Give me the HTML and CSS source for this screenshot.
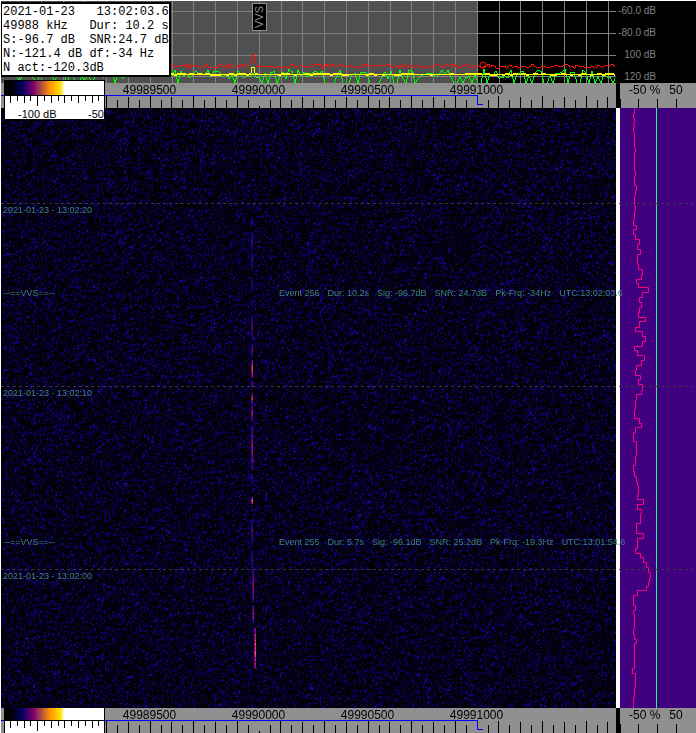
FILE: index.html
```html
<!DOCTYPE html>
<html lang="en">

<head>
    <meta charset="UTF-8">
    <meta name="viewport" content="width=device-width, initial-scale=1.0">
    <title>VVS 49988 kHz</title>
    <link rel="stylesheet" href="styles.css">
</head>

<body>
    <main class="analyzer">
        <section class="spectrum">
            <canvas class="plot" id="spectrum"></canvas>
            <div class="info">
                <pre>2021-01-23   13:02:03.6
49988 kHz   Dur: 10.2 s
S:-96.7 dB  SNR:24.7 dB
N:-121.4 dB df:-34 Hz
N act:-120.3dB</pre>
            </div>
            <span class="marker">VVS</span>
        </section>
        <div class="levels">
            <span>-60.0 dB</span>
            <span>-80.0 dB</span>
            <span>100 dB</span>
            <span>120 dB</span>
        </div>

        <div class="scale raised">
            <canvas class="plot" data-scale></canvas>
            <div class="freqs">
                <span>49989500</span><span>49990000</span><span>49990500</span><span>49991000</span>
            </div>
            <div class="legend">
                <div class="gradient"></div>
                <canvas class="legend-ticks" data-legend></canvas>
                <div class="legend-labels"><span>-100 dB</span><span>-50</span></div>
            </div>
        </div>
        <div class="percent">
            <canvas class="plot" data-percent></canvas>
            <span>-50 %</span><span>50</span>
        </div>

        <section class="recording">
            <canvas class="waterfall" id="waterfall"></canvas>
            <canvas class="profile" id="profile"></canvas>
            <div class="periods">
                <div class="period">2021-01-23 - 13:02:20</div>
                <div class="period">2021-01-23 - 13:02:10</div>
                <div class="period">2021-01-23 - 13:02:00</div>
            </div>
            <div class="event" style="top: 179px">
                <span>--==VVS==--</span>
                <div class="details"><span>Event 256</span><span>Dur: 10.2s</span><span>Sig: -96.7dB</span><span>SNR: 24.7dB</span><span>Pk-Frq: -34Hz</span><span>UTC:13:02:03.6</span></div>
            </div>
            <div class="event" style="top: 428px">
                <span>--==VVS==--</span>
                <div class="details"><span>Event 255</span><span>Dur: 5.7s</span><span>Sig: -96.1dB</span><span>SNR: 25.2dB</span><span>Pk-Frq: -19.3Hz</span><span>UTC:13:01:54.6</span></div>
            </div>
        </section>

        <div class="scale clipped">
            <canvas class="plot" data-scale></canvas>
            <div class="freqs">
                <span>49989500</span><span>49990000</span><span>49990500</span><span>49991000</span>
            </div>
            <div class="legend">
                <div class="gradient"></div>
                <canvas class="legend-ticks" data-legend></canvas>
            </div>
        </div>
        <div class="percent">
            <canvas class="plot" data-percent></canvas>
            <span>-50 %</span><span>50</span>
        </div>
    </main>

    <script src="script.js"></script>
</body>

</html>
```

FILE: styles.css
```css
* {
    box-sizing: border-box;
}

body {
    margin: 0;
    background: #fff;
    font-family: "Liberation Sans", Arial, sans-serif;
    font-size: 12px;
}

canvas {
    display: block;
}

.analyzer {
    display: grid;
    grid-template-columns: 1fr 80px;
    grid-template-rows: 83px 25px 1fr 25px;
    min-height: 100vh;
    padding-left: 1px;
}

.plot {
    position: absolute;
    top: 0;
    left: 0;
    width: 100%;
    height: 100%;
}

/* Spectrum */
.spectrum {
    position: relative;
    border-top: 1px solid #fff;
    background: #000;
}

.info {
    position: absolute;
    top: 1px;
    left: 0;
    padding: 1px 0 0 1px;
    border: 2px solid #000;
    border-left-width: 1px;
    background: #fff;
}

.info pre {
    margin: 0;
    font: 12px/14px "Liberation Mono", "Courier New", monospace;
}

.marker {
    position: absolute;
    top: 2px;
    left: 251px;
    width: 15px;
    height: 28px;
    border: 1px solid #909090;
    background: #000;
    color: #909090;
    font-size: 11px;
    line-height: 13px;
    text-align: center;
    writing-mode: vertical-rl;
    transform: rotate(180deg);
}

.levels {
    display: flex;
    flex-direction: column;
    padding-right: 40px;
    border-top: 1px solid #fff;
    background: #000;
    color: #808080;
    font-size: 10px;
    line-height: 20px;
    text-align: right;
    white-space: nowrap;
}

.levels span {
    flex: none;
    height: 22px;
}

/* Scales */
.scale {
    position: relative;
    background: #909090;
}

.raised {
    z-index: 1;
}

.clipped {
    overflow: hidden;
}

.freqs {
    display: flex;
    position: relative;
    padding-left: 94px;
    line-height: 15px;
}

.freqs span {
    width: 109px;
    text-align: center;
}

.legend {
    position: absolute;
    top: -3px;
    left: 3px;
    width: 101px;
    height: 40px;
    overflow: hidden;
    border: 1px solid #000;
    background: #fff;
}

.gradient {
    height: 15px;
    border-bottom: 1px solid #000;
    background: linear-gradient(to right, #000 6%, #000060 17%, #80006c 29%, #a84848 36%, #ff9000 45%, #ffe000 56%, #fff 60%);
}

.legend-ticks {
    width: 100%;
    height: 11px;
}

.legend-labels {
    display: flex;
    justify-content: space-between;
    padding-left: 13px;
    font-size: 11px;
    line-height: 14px;
}

.percent {
    display: flex;
    position: relative;
    gap: 9px;
    padding-left: 9px;
    border-left: 4px solid #000;
    background: #909090;
    line-height: 15px;
}

.percent span {
    position: relative;
}

/* Waterfall */
.recording {
    display: grid;
    position: relative;
    grid-column: 1 / 3;
    grid-template-columns: 1fr 76px;
    column-gap: 4px;
    min-height: 600px;
    color: #408080;
    font-size: 9px;
    line-height: 12px;
}

.waterfall,
.profile {
    width: 100%;
    height: 100%;
    min-width: 0;
    background: #000;
}

.profile {
    background: #400080;
}

.periods {
    position: absolute;
    inset: 0;
    overflow: hidden;
    padding-top: 95px;
}

.period {
    height: 183px;
    padding: 1px 2px;
    background: repeating-linear-gradient(to right, #383838 0 3px, transparent 3px 6px) top / 100% 1px no-repeat;
}

.event {
    display: flex;
    position: absolute;
    left: 0;
    padding-left: 3px;
    white-space: nowrap;
}

.event > span {
    width: 275px;
}

.details {
    display: flex;
    gap: 8px;
}
```

FILE: script.js
```javascript
let seed = 49988;

function random() {
    seed = (seed * 1664525 + 1013904223) % 4294967296;
    return seed / 4294967296;
}

function prepare(canvas) {
    canvas.width = canvas.clientWidth;
    canvas.height = canvas.clientHeight;
    return canvas.getContext("2d");
}

// one column per pixel, joined without smoothing
function trace(ctx, color, width, level) {
    ctx.fillStyle = color;
    let last = Math.round(level(0));
    for (let x = 0; x < width; x++) {
        const y = Math.round(level(x));
        ctx.fillRect(x, Math.min(y, last), 1, Math.max(1, Math.abs(y - last)));
        last = y;
    }
}

function drawSpectrum(canvas) {
    const ctx = prepare(canvas);
    const width = canvas.width - 1;
    ctx.fillStyle = "#505050";
    ctx.fillRect(0, 0, 476, canvas.height);

    ctx.fillStyle = "#808080";
    for (let i = 0; 18 + i * 21.8 < width; i++) {
        ctx.fillRect(Math.round(18 + i * 21.8), 0, 1, canvas.height);
    }
    for (const y of [10, 32, 54, 75]) {
        ctx.fillRect(0, y, canvas.width, 1);
    }

    // peaks and dips three pixels apart
    let from = 74;
    let to = 74;
    trace(ctx, "#00ff00", width, x => {
        if (x % 3 === 0) {
            from = to;
            to = random() > 0.72 ? 82 : 68 + random() * 10;
        }
        return from + (to - from) * (x % 3 + 1) / 3;
    });
    ctx.fillStyle = "#ffff00";
    ctx.fillRect(0, 73, width, 1);
    let sway = 0;
    trace(ctx, "#ffff00", width, x => {
        if (x % 4 === 0) {
            sway = random() * 3 - 1.5;
        }
        return Math.abs(x - 251) < 2 ? 66 : 73 + sway;
    });
    let ripple = 0;
    trace(ctx, "#ff1010", width, x => {
        if (x % 2 === 0) {
            ripple = random() * 4 - 2;
        }
        return 65 + ripple - Math.max(0, 4 - Math.abs(x - 251)) * 3;
    });
    ctx.strokeStyle = "#ff1010";
    ctx.beginPath();
    ctx.arc(482, 64, 3, 0, Math.PI * 2);
    ctx.stroke();
}

function drawScale(canvas) {
    const ctx = prepare(canvas);
    ctx.fillStyle = "#000";
    for (let i = 0; 105 + i * 10.9 < canvas.width; i++) {
        const top = i === 14 ? 23 : i % 2 ? 17 : i % 4 ? 14 : 13;
        if (i !== 34) {
            ctx.fillRect(Math.round(105 + i * 10.9), top, 1, 25 - top);
        }
    }
    // tuned band
    ctx.fillStyle = "#0000ff";
    ctx.fillRect(0, 12, 477, 1);
    ctx.fillRect(476, 12, 1, 10);
    ctx.fillRect(476, 21, 6, 1);
}

function drawPercent(canvas) {
    const ctx = prepare(canvas);
    ctx.fillStyle = "#000";
    for (const x of [0, 18, 37, 56]) {
        ctx.fillRect(x, 16, 1, 9);
    }
}

function drawLegend(canvas) {
    const ctx = prepare(canvas);
    ctx.fillStyle = "#000";
    for (let i = 0; i < 14; i++) {
        const height = i === 4 ? 10 : i % 2 ? 5 : 7;
        ctx.fillRect(Math.round(5 + i * 6.8), 0, 1, height);
    }
}

// x, first row, last row, strength
const signal = [
    [250, 110, 118, 0.5], [250, 124, 142, 0.55], [250, 145, 160, 0.5],
    [250, 170, 182, 0.5], [250, 192, 198, 0.4], [250, 207, 231, 0.55],
    [250, 235, 249, 0.6], [250, 252, 270, 1], [250, 272, 280, 0.6],
    [250, 285, 296, 0.95], [250, 297, 313, 0.75], [250, 318, 362, 0.75],
    [250, 366, 375, 0.5], [250, 389, 396, 1.1], [250, 411, 434, 0.55],
    [250, 443, 460, 0.5], [251, 461, 494, 0.75], [251, 497, 515, 0.75],
    [253, 520, 561, 1.1]
];

function heat(v) {
    if (v < 0.3) {
        return [v * 60, 0, 20 + v * 380];
    }
    if (v < 0.65) {
        return [20 + (v - 0.3) * 400, 0, 125];
    }
    return [160 + (v - 0.65) * 240, (v - 0.65) * 300, 110 - (v - 0.65) * 100];
}

function drawWaterfall(canvas) {
    const ctx = prepare(canvas);
    const { width, height } = canvas;
    const image = ctx.createImageData(width, height);
    const above = new Array(width).fill(0);

    function put(x, y, color) {
        const i = (y * width + x) * 4;
        image.data[i] = color[0];
        image.data[i + 1] = color[1];
        image.data[i + 2] = color[2];
        image.data[i + 3] = 255;
    }

    for (let y = 0; y < height; y++) {
        let left = 0;
        for (let x = 0; x < width; x++) {
            const noise = random();
            let v = noise * 0.4 + above[x] * 0.35 + left * 0.25;
            above[x] = noise;
            left = noise;
            if (x === 265 || x === 33 || x === 566) {
                v += 0.08;
            }
            put(x, y, v < 0.57 ? [2, 2, 6] : heat(Math.min(0.4, (v - 0.53) * 1.05)));
        }
    }
    for (const [x, from, to, strength] of signal) {
        for (let y = from; y < Math.min(to, height); y++) {
            const middle = 1 - Math.abs(y - (from + to) / 2) / (to - from) * 0.8;
            const v = strength * middle * (0.75 + random() * 0.3);
            put(x, y, heat(v * 0.7));
            put(x + 1, y, heat(v));
        }
    }
    ctx.putImageData(image, 0, 0);
}

// noise level in each block of rows: x, last row
const levels = [
    [14, 5], [13, 10], [14, 15], [13, 17], [14, 19], [13, 24], [14, 39], [15, 44],
    [14, 62], [15, 68], [14, 77], [16, 82], [15, 87], [14, 98], [15, 102], [14, 111],
    [13, 117], [16, 121], [13, 126], [15, 131], [19, 136], [17, 141], [20, 146],
    [17, 156], [18, 161], [22, 166], [21, 171], [16, 175], [18, 179], [28, 184],
    [22, 189], [19, 194], [21, 199], [19, 204], [18, 209], [25, 213], [19, 219],
    [15, 223], [22, 228], [25, 233], [22, 238], [14, 242], [17, 247], [24, 252],
    [21, 257], [16, 262], [15, 267], [20, 271], [18, 276], [22, 282], [21, 286],
    [16, 292], [15, 301], [14, 310], [19, 315], [21, 319], [15, 324], [13, 333],
    [16, 348], [15, 357], [13, 363], [14, 368], [16, 373], [17, 377], [18, 386],
    [17, 391], [23, 396], [17, 401], [21, 405], [20, 415], [16, 425], [23, 430],
    [17, 440], [15, 445], [20, 449], [23, 454], [26, 459], [28, 464], [30, 469],
    [29, 474], [28, 478], [26, 482], [17, 487], [13, 497], [15, 502], [13, 506],
    [14, 521], [13, 526], [14, 531], [16, 535], [14, 560], [12, 565], [15, 579],
    [14, 589], [13, 600]
];

function drawProfile(canvas) {
    const ctx = prepare(canvas);
    ctx.fillStyle = "#20ff80";
    ctx.fillRect(36, 0, 1, canvas.height);
    ctx.strokeStyle = "#ff0080";
    ctx.beginPath();
    let y = 0;
    for (const [x, end] of levels) {
        ctx.lineTo(x + 0.5, y + 0.5);
        ctx.lineTo(x + 0.5, end + 0.5);
        y = end;
    }
    ctx.stroke();
}

function draw() {
    seed = 49988;
    drawSpectrum(document.getElementById("spectrum"));
    drawWaterfall(document.getElementById("waterfall"));
    drawProfile(document.getElementById("profile"));
    document.querySelectorAll("[data-scale]").forEach(drawScale);
    document.querySelectorAll("[data-percent]").forEach(drawPercent);
    document.querySelectorAll("[data-legend]").forEach(drawLegend);
}

draw();
window.addEventListener("resize", draw);
```
